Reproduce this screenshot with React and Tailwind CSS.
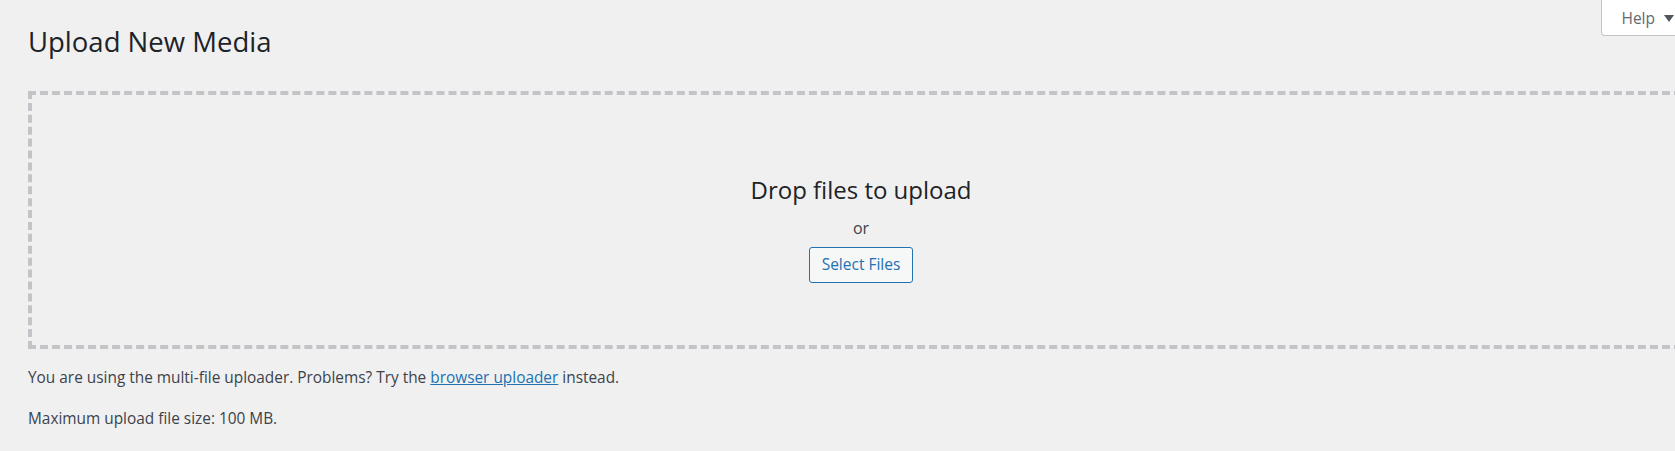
import React from "react";

function HelpTab() {
  return (
    <button className="flex h-[36px] items-center gap-[9px] self-start rounded-bl-[4px] border border-t-0 border-[#c3c4c7] bg-white pl-[19px] pr-[19px] text-[15.5px] leading-[22px] text-[#646970]">
      <span>Help</span>
      <svg width="10" height="7" viewBox="0 0 10 7" className="mt-[1px]">
        <polygon points="0,0 10,0 5,7" fill="#50575e" />
      </svg>
    </button>
  );
}

export default function App() {
  return (
    <div className="min-h-screen w-full overflow-hidden bg-[#f0f0f1] font-['Open_Sans',sans-serif]">
      <div className="w-[1714px] pl-[28px] pr-[20px]">
        <div className="flex items-start justify-between">
          <h1 className="pt-[24px] text-[27.5px] font-normal leading-[1.3] text-[#1d2327]">
            Upload New Media
          </h1>
          <HelpTab />
        </div>

        <div className="mt-[31px] h-[258px] border-4 border-dashed border-[#c3c4c7]">
          <div className="flex flex-col items-center pt-[80px]">
            <p className="text-[24px] leading-[30px] text-[#1d2327]">Drop files to upload</p>
            <p className="mt-[12px] text-[16px] leading-[22px] text-[#3c434a]">or</p>
            <button className="mt-[8px] h-[36px] w-[104px] rounded-[3px] border border-[#2271b1] bg-[#f6f7f7] text-[15.5px] text-[#2271b1]">
              Select Files
            </button>
          </div>
        </div>

        <p className="mt-[18px] text-[15.4px] leading-[22px] text-[#3c434a]">
          You are using the multi-file uploader. Problems? Try the{" "}
          <a href="#" className="text-[#2271b1] underline">browser uploader</a> instead.
        </p>
        <p className="mt-[19px] text-[15.4px] leading-[22px] text-[#3c434a]">
          Maximum upload file size: 100 MB.
        </p>
      </div>
    </div>
  );
}
